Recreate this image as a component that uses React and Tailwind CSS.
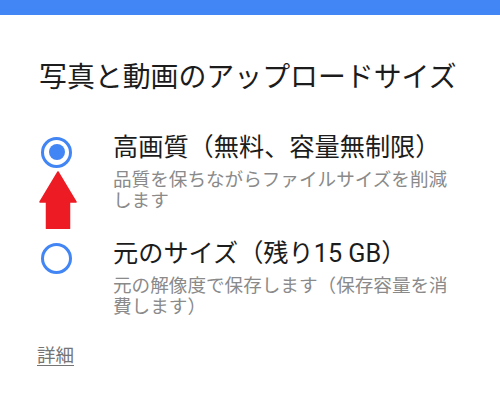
const font = { fontFamily: 'Roboto, "Noto Sans CJK JP", sans-serif' }

function Radio({ checked }) {
  return (
    <div className="w-[31px] h-[31px] rounded-full border-[3px] border-[#4285f4] flex items-center justify-center">
      {checked && <div className="w-[16px] h-[16px] rounded-full bg-[#4285f4]" />}
    </div>
  )
}

function Option({ checked, title, desc, children }) {
  return (
    <div className="relative flex">
      <div className="w-[113px] pl-[41px] pt-[3.5px] shrink-0">
        <Radio checked={checked} />
      </div>
      <div className="w-[345px]">
        <div className="text-[25.2px] leading-[30px] text-[#1c1c1c]">{title}</div>
        <div className="mt-[7px] text-[18.6px] leading-[21px] text-[#8a8a8a]">{desc}</div>
      </div>
      {children}
    </div>
  )
}

export default function App() {
  return (
    <div className="w-[500px] h-[406px] bg-white overflow-hidden" style={font}>
      <div className="h-[15px] bg-[#4285f4]" />
      <div className="pl-[39px] mt-[47px] text-[27.9px] leading-[32px] text-[#1c1c1c]">
        写真と動画のアップロードサイズ
      </div>
      <div className="mt-[39px]">
        <Option checked title="高画質（無料、容量無制限）" desc="品質を保ちながらファイルサイズを削減します">
          {/* annotation arrow */}
          <svg className="absolute left-[38.5px] top-[37.5px]" width="38" height="58" viewBox="0 0 38 58">
            <polygon
              points="19,1 37,31 30.5,31 30.5,57.5 7.5,57.5 7.5,31 1,31"
              fill="#ed1c24"
              stroke="#ed1c24"
              strokeWidth="1.5"
              strokeLinejoin="round"
            />
          </svg>
        </Option>
      </div>
      <div className="mt-[27px]">
        <Option title="元のサイズ（残り15 GB）" desc="元の解像度で保存します（保存容量を消費します）" />
      </div>
      <div className="pl-[37px] mt-[27px]">
        <span className="text-[18.5px] leading-[21px] text-[#757575] underline underline-offset-[3px]">詳細</span>
      </div>
    </div>
  )
}
